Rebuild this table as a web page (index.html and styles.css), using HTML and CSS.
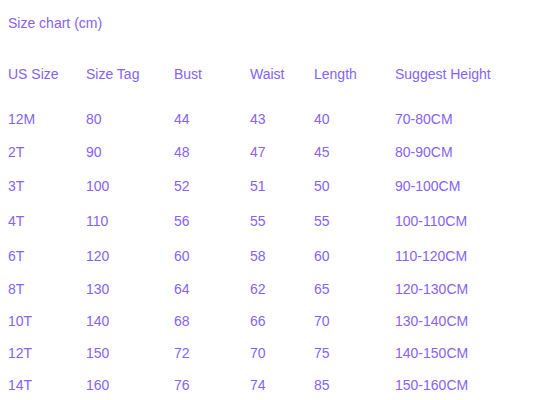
FILE: index.html
```html
<!DOCTYPE html>
<html lang="en">
<head>
<meta charset="utf-8">
<title>Size chart</title>
<link rel="stylesheet" href="styles.css">
</head>
<body>
<div class="page">
  <div class="title">Size chart (cm)</div>
  <div class="chart">
    <div class="row head"><span>US Size</span><span>Size Tag</span><span>Bust</span><span>Waist</span><span>Length</span><span>Suggest Height</span></div>
    <div class="body">
      <div class="row h33"><span>12M</span><span>80</span><span>44</span><span>43</span><span>40</span><span>70-80CM</span></div>
      <div class="row h33"><span>2T</span><span>90</span><span>48</span><span>47</span><span>45</span><span>80-90CM</span></div>
      <div class="row h34"><span>3T</span><span>100</span><span>52</span><span>51</span><span>50</span><span>90-100CM</span></div>
      <div class="row h36"><span>4T</span><span>110</span><span>56</span><span>55</span><span>55</span><span>100-110CM</span></div>
      <div class="row h34"><span>6T</span><span>120</span><span>60</span><span>58</span><span>60</span><span>110-120CM</span></div>
      <div class="row"><span>8T</span><span>130</span><span>64</span><span>62</span><span>65</span><span>120-130CM</span></div>
      <div class="row"><span>10T</span><span>140</span><span>68</span><span>66</span><span>70</span><span>130-140CM</span></div>
      <div class="row"><span>12T</span><span>150</span><span>72</span><span>70</span><span>75</span><span>140-150CM</span></div>
      <div class="row"><span>14T</span><span>160</span><span>76</span><span>74</span><span>85</span><span>150-160CM</span></div>
    </div>
  </div>
</div>
</body>
</html>
```
FILE: styles.css
```css
html, body {
  margin: 0;
  padding: 0;
  background: #ffffff;
}
body {
  font-family: "Liberation Sans", Arial, sans-serif;
  font-size: 14px;
  color: #8762f5;
}
.page {
  padding: 8px 8px 0 8px;
}
.title {
  line-height: 30px;
  height: 30px;
}
.chart {
  margin-top: 20px;
}
.row {
  display: grid;
  grid-template-columns: 78px 88px 76px 64px 81px 1fr;
  height: 32px;
  line-height: 32px;
  white-space: nowrap;
}
.head {
  margin-bottom: 12.5px;
}
.row.h33 { height: 33px; line-height: 33px; }
.row.h34 { height: 34px; line-height: 34px; }
.row.h36 { height: 36px; line-height: 36px; }
```
